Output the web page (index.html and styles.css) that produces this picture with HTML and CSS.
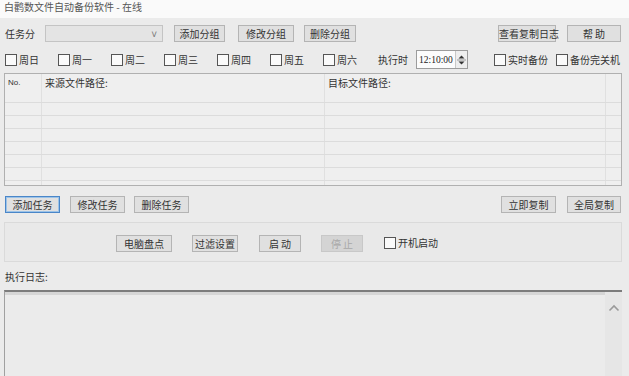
FILE: index.html
```html
<!DOCTYPE html>
<html lang="zh-CN">
<head>
    <meta charset="UTF-8">
    <title>白鹳数文件自动备份软件 - 在线</title>
    <link rel="stylesheet" href="styles.css">
</head>
<body>
    <div class="window">
        <div class="titlebar">
            <span class="title">白鹳数文件自动备份软件 - 在线</span>
        </div>

        <div class="row row-group">
            <span class="label group-label">任务分</span>
            <div class="combo"><span class="caret">&#x02C5;</span></div>
            <button class="btn w51 ml11">添加分组</button>
            <button class="btn w56 ml13">修改分组</button>
            <button class="btn w52 ml10">删除分组</button>
            <button class="btn w58 push">查看复制日志</button>
            <button class="btn w54 ml11">帮 助</button>
        </div>

        <div class="row row-days">
            <label class="check day"><span class="box"></span>周日</label>
            <label class="check day"><span class="box"></span>周一</label>
            <label class="check day"><span class="box"></span>周二</label>
            <label class="check day"><span class="box"></span>周三</label>
            <label class="check day"><span class="box"></span>周四</label>
            <label class="check day"><span class="box"></span>周五</label>
            <label class="check day"><span class="box"></span>周六</label>
            <span class="label exec-label">执行时</span>
            <div class="timebox">
                <span class="time">12:10:00</span>
                <span class="spin">
                    <svg width="9" height="14" viewBox="0 0 9 14">
                        <path d="M1.5 5.5 L4.5 2.5 L7.5 5.5 Z" fill="#333"/>
                        <line x1="0" y1="7" x2="9" y2="7" stroke="#999"/>
                        <path d="M1.5 8.5 L4.5 11.5 L7.5 8.5 Z" fill="#333"/>
                    </svg>
                </span>
            </div>
            <label class="check realtime"><span class="box"></span>实时备份</label>
            <label class="check shutdown"><span class="box"></span>备份完关机</label>
        </div>

        <div class="grid">
            <div class="grid-head">
                <span class="c-no">No.</span>
                <span class="c-src">来源文件路径:</span>
                <span class="c-dst">目标文件路径:</span>
                <span class="c-end"></span>
            </div>
            <div class="grid-row"><span></span><span></span><span></span><span></span></div>
            <div class="grid-row"><span></span><span></span><span></span><span></span></div>
            <div class="grid-row"><span></span><span></span><span></span><span></span></div>
            <div class="grid-row"><span></span><span></span><span></span><span></span></div>
            <div class="grid-row"><span></span><span></span><span></span><span></span></div>
            <div class="grid-row"><span></span><span></span><span></span><span></span></div>
            <div class="grid-row last"><span></span><span></span><span></span><span></span></div>
        </div>

        <div class="row row-tasks">
            <button class="btn w55 focus">添加任务</button>
            <button class="btn w55 ml10">修改任务</button>
            <button class="btn w55 ml9">删除任务</button>
            <button class="btn w55 push">立即复制</button>
            <button class="btn w54 ml11">全局复制</button>
        </div>

        <div class="panel">
            <button class="btn w56">电脑盘点</button>
            <button class="btn w45 ml20">过滤设置</button>
            <button class="btn w42 ml21">启 动</button>
            <button class="btn w42 ml20 disabled">停 止</button>
            <label class="check autostart"><span class="box"></span>开机启动</label>
        </div>

        <div class="label log-label">执行日志:</div>

        <div class="log">
            <div class="log-body"></div>
            <div class="scroll">
                <svg width="12" height="8" viewBox="0 0 12 8">
                    <path d="M1.5 6.5 L6 2 L10.5 6.5" fill="none" stroke="#9a9a9a" stroke-width="1.6"/>
                </svg>
            </div>
        </div>
    </div>
</body>
</html>
```

FILE: styles.css
```css
body {
    margin: 0;
    background: #ebebeb;
    font-family: "Noto Sans CJK SC", "Liberation Sans", sans-serif;
    font-size: 10px;
    line-height: 14px;
    color: #333;
}
.window {
    width: 629px;
    height: 376px;
    overflow: hidden;
    background: #ebebeb;
}
.titlebar {
    height: 18px;
    background: #fafafa;
    padding-left: 4px;
}
.title {
    display: block;
    font-size: 10px;
    line-height: 13px;
    color: #555;
}
.row {
    display: flex;
    align-items: center;
}
.label {
    color: #333;
}
.btn {
    height: 17px;
    padding: 0;
    border: 1px solid #b4b4b4;
    background: #e0e0e0;
    font-family: "Noto Sans CJK SC", "Liberation Sans", sans-serif;
    font-size: 10px;
    line-height: 15px;
    color: #333;
    text-align: center;
    white-space: nowrap;
}
.btn.focus {
    border-color: #4a86c8;
    box-shadow: inset 0 0 0 1px #9cc3e8;
}
.btn.disabled {
    background: #d4d4d4;
    border-color: #c8c8c8;
    color: #a8a8a8;
}
.push { margin-left: auto; }
.w42 { width: 42px; }
.w45 { width: 46px; }
.w51 { width: 51px; }
.w52 { width: 52px; }
.w54 { width: 54px; }
.w55 { width: 55px; }
.w56 { width: 56px; }
.w58 { width: 58px; }
.ml9 { margin-left: 9px; }
.ml10 { margin-left: 10px; }
.ml11 { margin-left: 11px; }
.ml13 { margin-left: 13px; }
.ml20 { margin-left: 20px; }
.ml21 { margin-left: 21px; }

/* group row */
.row-group {
    margin-top: 7px;
    padding: 0 8px 0 5px;
    height: 17px;
}
.group-label {
    width: 40px;
}
.combo {
    width: 111px;
    height: 15px;
    border: 1px solid #c4c4c4;
    background: #e4e4e4;
    display: flex;
    justify-content: flex-end;
    align-items: center;
    padding-right: 5px;
}
.combo .caret {
    font-size: 10px;
    color: #777;
    line-height: 10px;
}

/* day row */
.row-days {
    margin-top: 8px;
    padding-left: 5px;
    height: 19px;
}
.check {
    display: flex;
    align-items: center;
    gap: 2px;
    white-space: nowrap;
}
.box {
    width: 10px;
    height: 10px;
    border: 1px solid #555;
    background: #fafafa;
}
.day { width: 53px; }
.exec-label { margin-left: 2px; width: 38px; }
.timebox {
    width: 48px;
    height: 17px;
    border: 1px solid #9c9c9c;
    background: #fcfcfc;
    display: flex;
    align-items: center;
    justify-content: space-between;
    padding-left: 2px;
}
.time {
    font-family: "Liberation Serif", serif;
    font-size: 9.5px;
    color: #222;
}
.spin {
    width: 11px;
    height: 17px;
    border-left: 1px solid #c8c8c8;
    background: #eee;
    display: flex;
    align-items: center;
    justify-content: center;
}
.realtime { margin-left: 26px; }
.shutdown { margin-left: 8px; }

/* task table */
.grid {
    margin: 4px 7px 0 4px;
    height: 113px;
    border: 1px solid #b0b0b0;
    background: #efefef;
    overflow: hidden;
    box-sizing: border-box;
}
.grid-head,
.grid-row {
    display: grid;
    grid-template-columns: 36px 283px 281px 1fr;
    border-bottom: 1px solid #dcdcdc;
}
.grid-head { height: 28px; }
.grid-row { height: 12px; }
.grid-row.last { border-bottom: none; }
.grid-head span,
.grid-row span {
    border-left: 1px solid #e0e0e0;
}
.grid-head span:first-child,
.grid-row span:first-child { border-left: none; }
.grid-head span {
    padding: 2px 0 0 3px;
    color: #333;
}
.grid-head .c-no {
    font-family: "Liberation Sans", sans-serif;
    font-size: 8px;
}

/* task buttons */
.row-tasks {
    margin-top: 10px;
    padding: 0 8px 0 5px;
    height: 17px;
}

/* control panel */
.panel {
    margin: 9px 7px 0 4px;
    height: 40px;
    border: 1px solid #dadada;
    background: #e9e9e9;
    display: flex;
    align-items: center;
    padding-left: 111px;
    padding-top: 2px;
    box-sizing: border-box;
}
.autostart { margin-left: 21px; }

.log-label {
    margin: 8px 0 0 5px;
    height: 14px;
}

.log {
    margin: 6px 7px 0 4px;
    height: 90px;
    border-top: 2px solid #7c7c7c;
    border-left: 1px solid #a0a0a0;
    display: flex;
    background: #ececec;
}
.log-body {
    flex: 1;
    border-top: 3px solid #d6d6d6;
    background: #ebebeb;
}
.scroll {
    width: 17px;
    background: #e6e6e6;
    display: flex;
    justify-content: center;
    padding-top: 12px;
}
```
